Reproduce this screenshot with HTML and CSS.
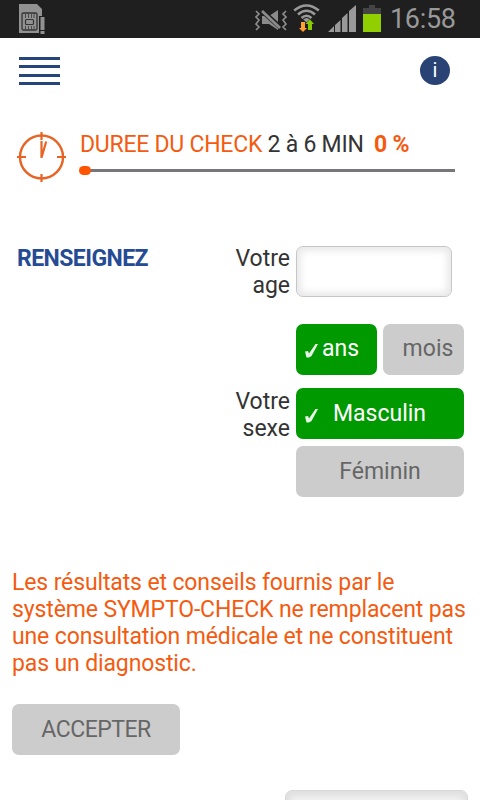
FILE: index.html
```html
<!DOCTYPE html>
<html lang="fr">
<head>
    <meta charset="UTF-8">
    <meta name="viewport" content="width=device-width, initial-scale=1.0">
    <title>Sympto-Check</title>
    <link rel="stylesheet" href="styles.css">
</head>
<body>
    <div class="status-bar">
        <svg class="sim-icon" width="28" height="31" viewBox="0 0 28 31">
            <path d="M1 0h18l5 5v7h-3v17H1z" fill="#919191"/>
            <rect x="4" y="9" width="15" height="17" rx="1.500" fill="#919191" stroke="#333" stroke-width="1.300"/>
            <path d="M7.500 9v5M10.500 9v5M13.500 9v5M16 9v5M7.500 22v4M10.500 22v4M13.500 22v4M16 22v4" stroke="#444" stroke-width=".9"/>
            <rect x="7.500" y="15.500" width="8" height="5" rx="1" fill="#919191" stroke="#333" stroke-width="1.200"/>
            <path d="M22.500 13h4v13h-4zM22.500 27h4v3h-4z" fill="#919191"/>
        </svg>
        <div class="status-icons">
            <svg width="32" height="22" viewBox="0 0 32 22" fill="none" stroke="#8b8b8b" stroke-width="1.700">
                <path d="M7 6h7l9-6v20l-9-6H7z" fill="#8b8b8b" stroke="none"/>
                <path d="M6 0l20 18" stroke="#1f1f1f" stroke-width="5"/>
                <path d="M7 1l18 17" stroke-width="2.800"/>
                <path d="M1 1l3 3-3 3 3 3-3 4 3 3-3 3M31 1l-3 3 3 3-3 3 3 4-3 3 3 3"/>
            </svg>
            <svg width="28" height="30" viewBox="0 0 28 30">
                <g fill="none" stroke="#999" stroke-width="2.600">
                    <path d="M1.200 6.500Q13.500-3.500 25.800 6.500M5 10.500Q13.500 3 22 10.500M8.500 14Q13.500 9.500 18.500 14"/>
                </g>
                <path d="M10.200 15.500Q13.500 12.500 16.800 15.500L13.500 18.500z" fill="#999"/>
                <path d="M8 18h4v6h2l-4 4-4-4h2z" fill="#ffa033"/>
                <path d="M15 26v-6h-2.500l4.500-4.500 4 4.500h-2v6z" fill="#8c0"/>
            </svg>
            <svg width="28" height="28" viewBox="0 0 28 28" fill="#999">
                <path d="M0 27l6-6v6zM7 20l5.500-5v12H7zM14 13l5.500-5v19H14zM21 6l7-6v27h-7z"/>
            </svg>
            <svg width="18" height="27" viewBox="0 0 18 27">
                <path d="M6 0h6v3h6v6H0V3h6z" fill="#444"/>
                <path d="M0 9h18v18H0z" fill="#92cf00"/>
            </svg>
        </div>
        <span class="clock">16:58</span>
    </div>

    <div class="top-bar">
        <div class="menu">
            <span></span>
            <span></span>
            <span></span>
            <span></span>
        </div>
        <div class="info">i</div>
    </div>

    <div class="progress">
        <svg class="timer" width="50" height="52" viewBox="0 0 50 52" fill="none" stroke="#e76424">
            <circle cx="24.500" cy="26" r="21.500" stroke-width="2.400"/>
            <path d="M24.500 1v8M24.500 43v8M0 26h9M40 26h9" stroke-width="2.200"/>
            <path d="M24.500 27V10M24.700 26l4.500-15.500" stroke-width="2.200"/>
        </svg>
        <div class="progress-body">
            <div class="progress-text">
                <span class="orange">DUREE DU CHECK</span>
                <span>2 à 6 MIN</span>
                <span class="percent">0 %</span>
            </div>
            <div class="track"><span class="knob"></span></div>
        </div>
    </div>

    <div class="form">
        <h2>RENSEIGNEZ</h2>
        <div class="fields">
            <label class="label" for="age">Votre<br>age</label>
            <input class="age" id="age" type="text">
            <div class="units">
                <div class="btn active unit">
                    <svg class="check" width="14" height="15" viewBox="0 0 14 15"><path d="M0 8.500l3-.5 1 2.500L10.500 1H13L6.500 13 4 14.500H1.500z" fill="#e7f5e7"/></svg>
                    <span>ans</span>
                </div>
                <div class="btn unit month">mois</div>
            </div>
            <div class="label sex">Votre<br>sexe</div>
            <div class="choices">
                <div class="btn active male">
                    <svg class="check" width="14" height="15" viewBox="0 0 14 15"><path d="M0 8.500l3-.5 1 2.500L10.500 1H13L6.500 13 4 14.500H1.500z" fill="#e7f5e7"/></svg>
                    <span>Masculin</span>
                </div>
                <div class="btn female">Féminin</div>
            </div>
        </div>
    </div>

    <p class="notice">Les résultats et conseils fournis par le<br>système SYMPTO-CHECK ne remplacent pas<br>une consultation médicale et ne constituent<br>pas un diagnostic.</p>
    <div class="btn accept">ACCEPTER</div>
    <div class="next"></div>
</body>
</html>
```

FILE: styles.css
```css
* {
    margin: 0;
    padding: 0;
    box-sizing: border-box;
}

body {
    width: 480px;
    height: 800px;
    overflow: hidden;
    background: #fff;
    color: #333;
    font-family: Roboto, sans-serif;
    font-size: 23px;
    line-height: 27px;
}

svg {
    display: block;
    flex: none;
}

.status-bar {
    display: flex;
    justify-content: space-between;
    height: 38px;
    padding: 4px 24px 0 18px;
    background: #1f1f1f;
}

.status-icons {
    display: flex;
    gap: 8px;
    margin-left: auto;
    margin-right: 9px;
}

.status-icons svg:nth-child(1) {
    margin-top: 6px;
    margin-right: -2px;
}

.status-icons svg:nth-child(2) {
    margin-right: -1px;
}

.status-icons svg:nth-child(3) {
    margin-right: -1px;
    margin-top: 1px;
}

.status-icons svg:nth-child(4) {
    margin-top: 1px;
}

.clock {
    width: 66px;
    color: #999;
    font-size: 27px;
    line-height: 31px;
    letter-spacing: -0.3px;
}

.top-bar {
    display: flex;
    justify-content: space-between;
    height: 93px;
    padding: 18px 30px 0 19px;
}

.menu {
    display: flex;
    flex-direction: column;
    gap: 5.3px;
    padding-top: 1px;
}

.menu span {
    width: 41px;
    height: 3px;
    background: #26457a;
}

.info {
    width: 30px;
    height: 29px;
    border-radius: 50%;
    background: #284374;
    color: #fff;
    font-size: 20px;
    line-height: 28px;
    text-align: center;
}

.progress {
    display: flex;
    gap: 13px;
    height: 114px;
    padding: 0 25px 0 17px;
}

.progress-body {
    width: 375px;
}

.progress-text {
    letter-spacing: -0.25px;
    white-space: nowrap;
}

.orange,
.notice {
    color: #f45b11;
}

.percent {
    margin-left: 5px;
    color: #f45b11;
    font-weight: bold;
}

.track {
    display: flex;
    align-items: center;
    height: 3px;
    margin-top: 11px;
    background: #77767b;
}

.knob {
    width: 12px;
    height: 9px;
    margin-left: -1px;
    border-radius: 5px;
    background: #ff5500;
}

.form {
    display: flex;
    height: 324px;
    padding: 0 16px 0 17px;
}

h2 {
    width: 203px;
    color: #254b94;
    font-size: 23px;
    line-height: 27px;
    letter-spacing: -0.55px;
}

.fields {
    display: grid;
    grid-template-columns: 70px 168px;
    grid-template-rows: 79px 64px 110px;
    column-gap: 6px;
    align-items: start;
}

.label {
    text-align: right;
}

.age {
    width: 156px;
    height: 51px;
    margin-top: 1px;
    border: 1px solid #c6c6c6;
    border-radius: 7px;
    background: #fff;
    box-shadow: inset 0 0 7px 4px #e9e9e9;
}

.units {
    grid-column: 2;
    display: flex;
    gap: 6px;
}

.btn {
    display: flex;
    align-items: center;
    justify-content: center;
    height: 51px;
    border-radius: 7px;
    background: #ccc;
    color: #666;
}

.btn.active {
    justify-content: flex-start;
    padding-left: 9px;
    background: #090;
    color: #fff;
}

.unit {
    width: 81px;
    padding-bottom: 2px;
}

.check {
    margin-top: 3px;
}

.unit .check {
    margin-right: 3px;
}

.male .check {
    margin-right: 14px;
}

.month {
    padding-left: 9px;
}

.choices {
    display: flex;
    flex-direction: column;
    gap: 7px;
}

.notice {
    height: 135px;
    margin-left: 12px;
    letter-spacing: -0.13px;
    white-space: nowrap;
}

.accept {
    width: 168px;
    margin-left: 12px;
    letter-spacing: -0.5px;
}

.next {
    width: 183px;
    height: 50px;
    margin: 35px 0 0 285px;
    border: 1px solid #d8d8d8;
    border-radius: 7px;
    background: #f4f4f4;
    box-shadow: inset 0 2px 8px 3px #ddd;
}
```
